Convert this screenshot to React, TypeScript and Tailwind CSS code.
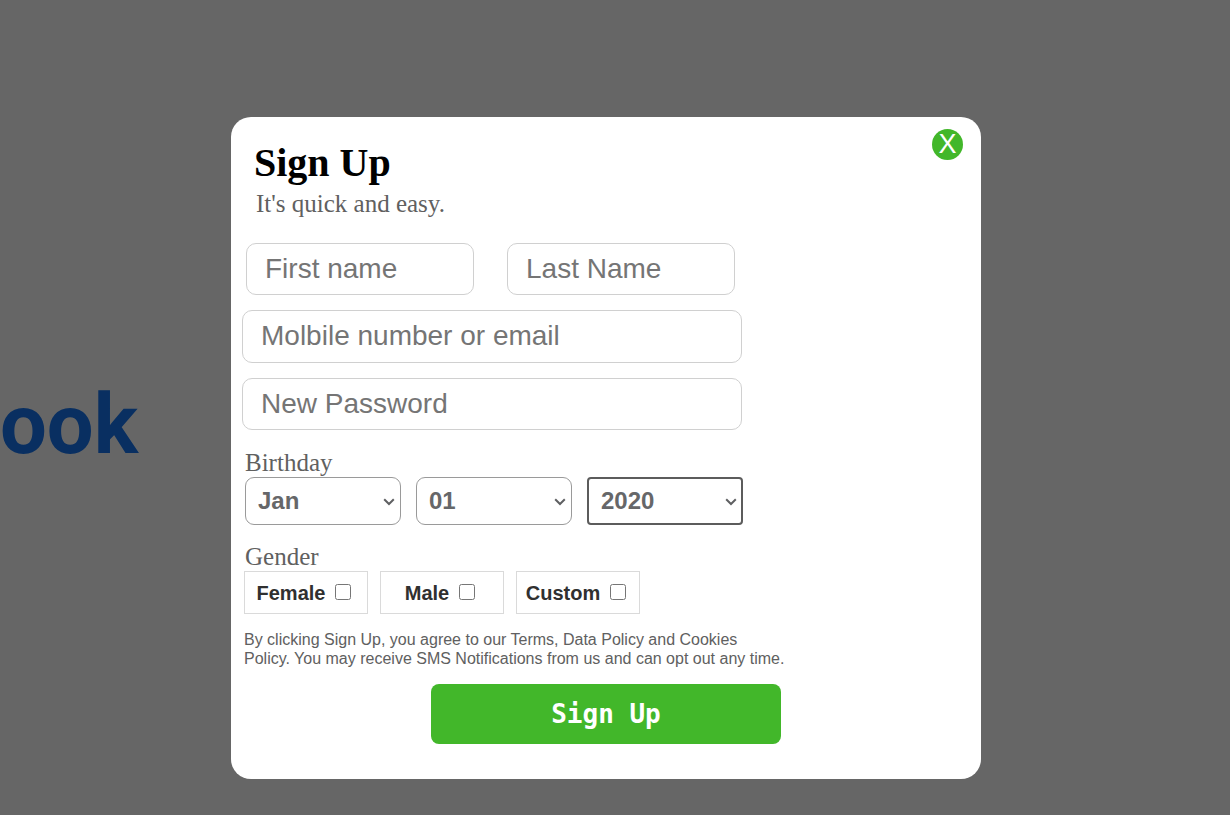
import { useState } from "react";

const SANS = "font-['Liberation_Sans',Arial,sans-serif]";
const SERIF = "font-['Liberation_Serif','Times_New_Roman',serif]";

const MONTHS = ["Jan", "Feb", "Mar", "Apr", "May", "Jun", "Jul", "Aug", "Sep", "Oct", "Nov", "Dec"];
const DAYS = Array.from({ length: 31 }, (_, i) => String(i + 1).padStart(2, "0"));
const YEARS = Array.from({ length: 60 }, (_, i) => String(2020 - i));
const GENDERS = ["Female", "Male", "Custom"];

function Field({ label, type = "text" }: { label: string; type?: string }) {
  return (
    <input
      type={type}
      aria-label={label}
      placeholder={label}
      className={`${SANS} w-full min-w-0 rounded-[10px] border border-[#d0d0d0] bg-white px-[18px] text-[28px] text-[#333] placeholder:text-[#757575]`}
    />
  );
}

function DateSelect({ label, options, active = false }: { label: string; options: string[]; active?: boolean }) {
  const frame = active ? "rounded-[4px] border-2 border-[#5c5c5c]" : "rounded-[9px] border border-[#9a9a9a]";
  return (
    <div className="relative min-w-0 flex-1">
      <select
        aria-label={label}
        className={`${SANS} ${frame} block h-12 w-full appearance-none bg-white pl-3 text-2xl font-bold text-[#666769] outline-none`}
      >
        {options.map((o) => (
          <option key={o}>{o}</option>
        ))}
      </select>
      <svg
        viewBox="0 0 12 8"
        aria-hidden="true"
        className="pointer-events-none absolute top-[21px] right-1.5 h-2 w-3"
        fill="none"
        stroke="#5f6062"
        strokeWidth="2"
      >
        <path d="M1.2 1.3 6 6l4.8-4.7" />
      </svg>
    </div>
  );
}

export default function App() {
  const [open, setOpen] = useState(true);

  return (
    <div className="relative min-h-screen overflow-hidden bg-white">
      <div className="absolute top-[375px] left-0 font-[Roboto,sans-serif] text-[83px] leading-[100px] font-bold text-[#1877f2]">
        ook
      </div>

      {open && (
        <div className="relative flex min-h-screen items-start justify-center bg-black/60 pt-[117px] pr-[18px] pb-9">
          <form
            className="relative w-full max-w-[750px] rounded-[20px] bg-white pt-[23px] pr-[11px] pb-[35px] pl-[11px]"
            onSubmit={(e) => e.preventDefault()}
          >
            <button
              type="button"
              aria-label="X"
              onClick={() => setOpen(false)}
              className={`${SANS} absolute top-3 right-[18px] flex size-[31px] items-center justify-center rounded-full bg-[#42b72a] text-[27px] leading-none text-white`}
            >
              X
            </button>

            <h1 className={`${SERIF} mb-1 pl-3 text-[40px] leading-[46px] font-bold text-black`}>Sign Up</h1>
            <p className={`${SERIF} pl-[14px] text-[25px] leading-7 text-[#606060]`}>It's quick and easy.</p>

            <div className="mt-[25px] grid h-[187px] max-w-[500px] grid-rows-3 gap-[15px]">
              <div className="flex gap-[33px] pr-[7px] pl-1">
                <Field label="First name" />
                <Field label="Last Name" />
              </div>
              <Field label="Molbile number or email" />
              <Field label="New Password" type="password" />
            </div>

            <fieldset className="mt-[19px] max-w-[501px] pl-[3px]">
              <legend className={`${SERIF} text-[25px] leading-7 text-[#606060]`}>Birthday</legend>
              <div className="flex gap-[15px]">
                <DateSelect label="Month" options={MONTHS} />
                <DateSelect label="Day" options={DAYS} />
                <DateSelect label="Year" options={YEARS} active />
              </div>
            </fieldset>

            <fieldset className="mt-[18px] pl-[2px]">
              <legend className={`${SERIF} pl-px text-[25px] leading-7 text-[#606060]`}>Gender</legend>
              <div className="flex gap-3">
                {GENDERS.map((g) => (
                  <label
                    key={g}
                    className={`${SANS} flex h-[43px] w-[124px] items-center justify-center gap-[10px] border border-[#dadada] pr-1 text-xl font-bold text-[#303030]`}
                  >
                    {g}
                    <input type="checkbox" className="mb-0.5 size-4" />
                  </label>
                ))}
              </div>
            </fieldset>

            <p className={`${SANS} mt-4 pl-[2px] text-base leading-[19px] text-[#606060]`}>
              By clicking Sign Up, you agree to our Terms, Data Policy and Cookies
              <br />
              Policy. You may receive SMS Notifications from us and can opt out any time.
            </p>

            <button
              type="submit"
              className="mx-auto mt-4 block h-[60px] w-full max-w-[350px] rounded-lg bg-[#42b72a] font-['DejaVu_Sans_Mono',monospace] text-[26px] font-bold text-white"
            >
              Sign Up
            </button>
          </form>
        </div>
      )}
    </div>
  );
}
